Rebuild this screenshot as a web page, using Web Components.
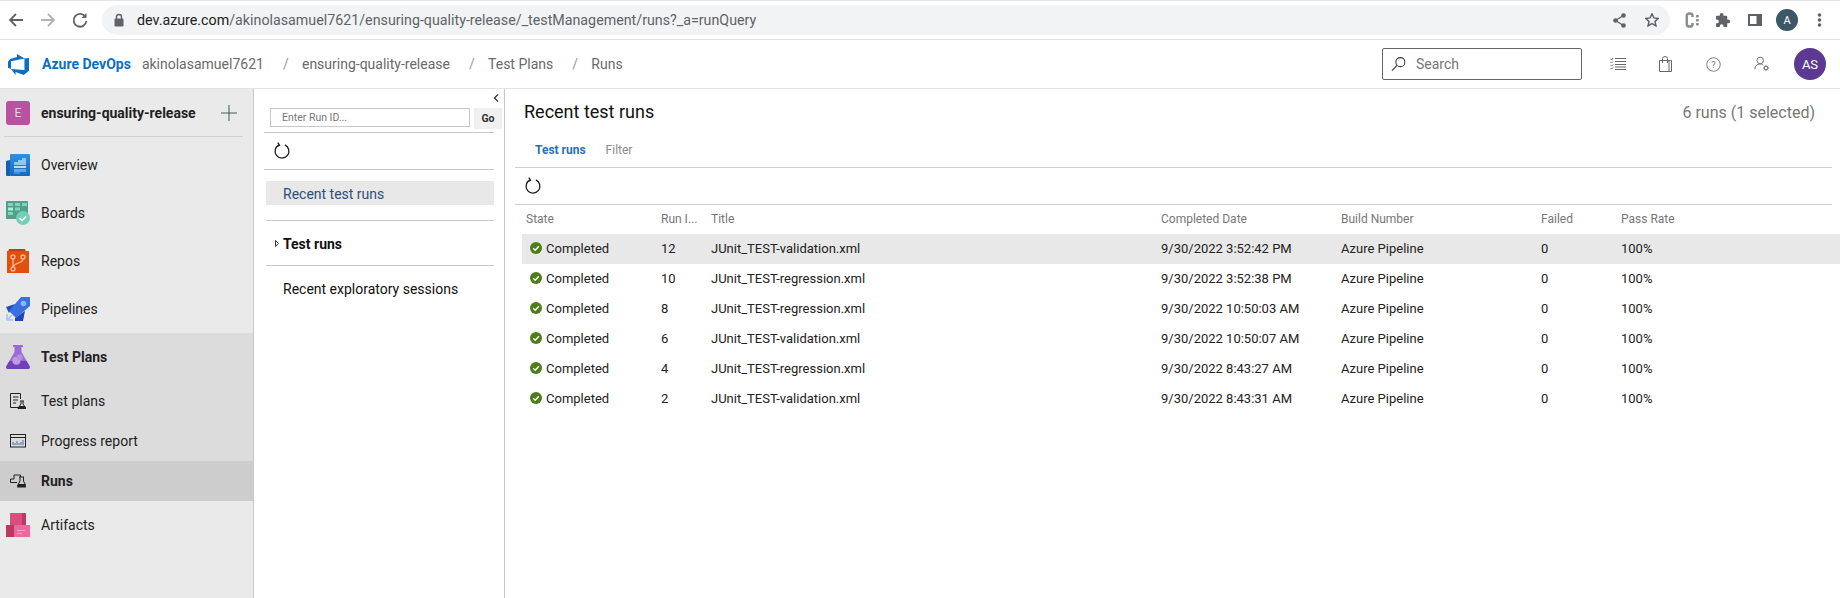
<!DOCTYPE html>
<html><head><meta charset="utf-8"><title>Runs</title>
<style>
html,body{margin:0;padding:0;height:598px;overflow:hidden;background:#fff;font-family:Roboto,"Liberation Sans",sans-serif;color:#222}
body{display:flex;flex-direction:column}
</style></head><body>
<chrome-bar></chrome-bar>
<ado-header></ado-header>
<app-main></app-main>
<script>
const def=(name,html)=>customElements.define(name,class extends HTMLElement{
  constructor(){super();this.attachShadow({mode:'open'}).innerHTML=typeof html==='function'?html(this):html}
  connectedCallback(){if(typeof html==='function')this.shadowRoot.innerHTML=html(this)}
});
const refresh=`<svg width="18" height="18" viewBox="0 0 18 18" fill="none" stroke="#1c1c1c" stroke-width="1.300"><path d="M6 3A6.900 6.900 0 1 0 11.800 2.900"/><path d="M4.800 .6 6.500 3.300 3.200 4.800"/></svg>`;

def('chrome-bar',`<style>
:host{display:flex;align-items:center;height:40px;flex:none;box-sizing:border-box;border-top:1px solid #e3e4e6;border-bottom:1px solid #dfe1e4;background:#fff;padding-left:7px}
svg{display:block;flex:none}
.url{flex:none;margin-left:13px;width:1568px;height:30px;border-radius:15px;background:#f1f3f4;display:flex;align-items:center;box-sizing:border-box;padding:0 11px;font:14.25px Roboto,sans-serif;color:#5f6368;white-space:nowrap}
.url b{font-weight:400;color:#202124}
.t{flex:1}
.r{display:flex;align-items:center;margin-left:15px}
.a{width:22px;height:22px;border-radius:50%;background:#3c5866;color:#fff;font:11px Roboto,sans-serif;display:flex;align-items:center;justify-content:center}
</style>
<svg width="18" height="18" viewBox="0 0 18 18" fill="none" stroke="#5f6368" stroke-width="1.8" style="margin-right:14px"><path d="M16 9H3M9 3 3 9l6 6"/></svg>
<svg width="18" height="18" viewBox="0 0 18 18" fill="none" stroke="#b0b3b7" stroke-width="1.8" style="margin-right:14px"><path d="M2 9h13M9 3l6 6-6 6"/></svg>
<svg width="18" height="18" viewBox="0 0 18 18" fill="none" stroke="#5f6368" stroke-width="1.8"><path d="M14.500 6A6.400 6.400 0 1 0 15.400 10"/><path d="M15.500 2v5h-5" fill="#5f6368" stroke="none"/></svg>
<div class="url"><svg width="12" height="14" viewBox="0 0 12 14" style="margin-right:12px"><path d="M3.500 6V4a2.500 2.500 0 0 1 5 0v2" fill="none" stroke="#5f6368" stroke-width="1.400"/><rect x="1.500" y="5.500" width="9" height="8" rx="1.200" fill="#5f6368"/></svg><span><b>dev.azure.com</b>/akinolasamuel7621/ensuring-quality-release/_testManagement/runs?_a=runQuery</span><span class="t"></span>
<svg width="13" height="15" viewBox="0 0 13 15" style="margin-right:19px"><g fill="#5f6368"><circle cx="10.500" cy="2.500" r="2.300"/><circle cx="10.500" cy="12.500" r="2.300"/><circle cx="2.500" cy="7.500" r="2.300"/></g><path d="M10.500 2.500 2.500 7.500l8 5" fill="none" stroke="#5f6368" stroke-width="1.300"/></svg>
<svg width="14" height="14" viewBox="1 1 14 14"><path d="m8 1.800 1.900 4.100 4.400.5-3.300 3 .9 4.400L8 11.600l-3.900 2.200.9-4.400-3.300-3 4.400-.5z" fill="none" stroke="#5f6368" stroke-width="1.500"/></svg></div>
<div class="r">
<svg width="14" height="16" viewBox="0 0 14 16" style="margin-right:17px"><path d="M7.500 5V3.800C7.500 2 6.500 1.400 4.700 1.400S1.800 2 1.800 3.800v8.400c0 1.800 1 2.400 2.900 2.400s2.800-.6 2.800-2.400V11" fill="none" stroke="#8a8d91" stroke-width="2.500"/><g fill="#8a8d91"><rect x="11" y="3" width="2.800" height="2.400" rx=".6"/><rect x="11" y="7" width="2.800" height="2.400" rx=".6"/><rect x="11" y="11" width="2.800" height="2.400" rx=".6"/></g></svg>
<svg width="15" height="15" viewBox="2 2 16 16" style="margin-right:17px"><path fill="#5f6368" d="M3 5h3V4a2 2 0 0 1 4 0v1h3a1 1 0 0 1 1 1v3h1a2 2 0 0 1 0 4h-1v3a1 1 0 0 1-1 1h-3v-1a2 2 0 0 0-4 0v1H3a1 1 0 0 1-1-1v-3h1a2 2 0 0 0 0-4H2V6a1 1 0 0 1 1-1z"/></svg>
<svg width="14" height="12" viewBox="0 0 14 12" style="margin-right:14px"><path fill="#5f6368" fill-rule="evenodd" d="M0 0h14v12H0zM2 2v8h6.500V2z"/></svg>
<span class="a">A</span>
<svg width="5" height="14" viewBox="0 0 5 14" style="margin-left:19px"><g fill="#5f6368"><circle cx="2.500" cy="2" r="1.800"/><circle cx="2.500" cy="7" r="1.800"/><circle cx="2.500" cy="12" r="1.800"/></g></svg>
</div>`);

def('ado-header',`<style>
:host{display:flex;align-items:center;height:49px;flex:none;box-sizing:border-box;border-bottom:1px solid #e3e3e3;background:#fff;padding:0 14px 0 8px;font-size:14px;color:#6a6a6a}
.brand{color:#0b6fc6;font-weight:700;font-size:14px;margin-left:13px;margin-right:11px;white-space:nowrap}
.s{color:#9a9a9a;margin:0 13.300px 0 19px}
.sp{flex:1}
.search{width:200px;height:32px;box-sizing:border-box;border:1px solid #666;border-radius:2px;display:flex;align-items:center;padding-left:8px;gap:10px;color:#767676;font-size:14px;margin-right:28px}
.ic{display:flex;align-items:center}
.av{width:32px;height:32px;border-radius:50%;background:#5c3a94;color:#fff;display:flex;align-items:center;justify-content:center;font-size:13px;margin-left:24px}
</style>
<svg width="21" height="21" viewBox="1 1 16 16"><path fill="#0b6fc6" d="M17 4v9.740l-4 3.280-6.200-2.260V17L3.290 12.410l10.230.8V4.440zm-3.410.49L7.850 1V3.290L2.580 4.840 1 6.870v4.610l2.260 1V6.570z"/></svg>
<span class="brand">Azure DevOps</span><span>akinolasamuel7621</span><span class="s">/</span><span>ensuring-quality-release</span><span class="s">/</span><span>Test Plans</span><span class="s">/</span><span>Runs</span><span class="sp"></span>
<div class="search"><svg width="15" height="16" viewBox="0 0 16 16" fill="none" stroke="#333" stroke-width="1.100"><circle cx="10" cy="6" r="4.800"/><path d="M6.500 9.500 1 15"/></svg>Search</div>
<span class="ic" style="margin-right:33px"><svg width="16" height="12" viewBox="0 0 16 12" fill="none" stroke="#666" stroke-width="1"><path d="M5 .5h11M5 3.500h11M5 6.500h11M5 9h11M5 11.500h11M.5 1l1 1 1.500-2M.5 4l1 1 1.500-1.500M.5 7l1 1 1.500-1.500M.5 10l1 1 1.500-1.500"/></svg></span>
<span class="ic" style="margin-right:34px"><svg width="13" height="16" viewBox="0 0 13 16" fill="none" stroke="#666" stroke-width="1"><path d="M.5 4.500h12v11H.5zM3.500 7V2.800a2.500 2.300 0 0 1 5 0V7M10 4.500v11"/></svg></span>
<span class="ic" style="margin-right:33px"><svg width="15" height="15" viewBox="0 0 16 16"><circle cx="8" cy="8" r="7.200" fill="none" stroke="#777" stroke-width="1"/><text x="8" y="11.600" font-size="10" text-anchor="middle" fill="#777" font-family="Roboto">?</text></svg></span>
<span class="ic"><svg width="16" height="16" viewBox="0 0 18 18" fill="none" stroke="#666" stroke-width="1"><circle cx="7" cy="5" r="3.700"/><path d="M1 15c0-4 2.500-6 6-6 1 0 2 .2 2.800.6"/><circle cx="13.500" cy="13.500" r="2"/><path d="M13.500 10v1.500M13.500 15.500V17M10 13.500h1.500M15.500 13.500H17M11 11l1 1M15 15l1 1M16 11l-1 1M12 15l-1 1"/></svg></span>
<span class="av">AS</span>`);

def('nav-item',`<style>
:host{display:flex;align-items:center;box-sizing:border-box;font-size:14px;color:#222;height:var(--h,48px);padding-left:6px;background:var(--bg,transparent);font-weight:var(--w,400)}
.i{width:24px;height:24px;flex:none;display:flex;align-items:center;justify-content:center;margin-right:11px}
</style><span class="i"><slot name="i"></slot></span><slot></slot>`);

def('ado-sidebar',`<style>
:host{display:block;width:253px;flex:none;background:#eaeaea;border-right:1px solid #c8c8c8;box-sizing:content-box}
.proj{display:flex;align-items:center;height:47px;padding-left:6px;font-weight:700;font-size:14px;color:#222}
.e{width:24px;height:24px;border-radius:3px;background:#b9539f;color:#e9cfe4;font-size:12px;font-weight:400;display:flex;align-items:center;justify-content:center;margin-right:11px}
.pl{margin-left:auto;margin-right:15px;display:flex}
.d{height:1px;background:#d0d0d0;margin:0 10px 4px 4px}
.grp{background:#dcdcdc}
svg{display:block}
</style>
<div class="proj"><span class="e">E</span>ensuring-quality-release<span class="pl"><svg width="18" height="18" viewBox="0 0 18 18"><path d="M9 1v16" stroke="#1f6b5a" stroke-width="1"/><path d="M1 9h16" stroke="#555" stroke-width="1"/></svg></span></div>
<div class="d"></div>
<nav-item><svg slot="i" width="24" height="24" viewBox="0 0 24 24"><defs><linearGradient id="ov" x1="0" y1="0" x2="0" y2="1"><stop offset="0" stop-color="#2f90e6"/><stop offset="1" stop-color="#1668bd"/></linearGradient></defs><path fill="#1560ad" d="M0 8l4-1v16H1a1 1 0 0 1-1-1z"/><rect x="4" y="1" width="20" height="22" rx="1" fill="url(#ov)"/><path fill="#8cc8f4" d="M16 5h4v7H8V9h4V7h4z"/><path fill="#b9def8" d="M8 13h12v2H8z"/><path fill="#5ea8e8" d="M8 16h12v3H8z"/><path fill="#3c8fdc" d="M8 19h6v2H8z"/></svg>Overview</nav-item>
<nav-item><svg slot="i" width="24" height="24" viewBox="0 0 24 24"><rect x="0" y="0" width="22" height="18" fill="#50a08a"/><g fill="#84d2bd"><rect x="2" y="2" width="5" height="3"/><rect x="9" y="2" width="5" height="3"/><rect x="16" y="2" width="5" height="3"/><rect x="9" y="6.500" width="5" height="3"/></g><rect x="2" y="6.500" width="5" height="3" fill="#a8f0df"/><rect x="2" y="11" width="5" height="3" fill="#84d2bd"/><circle cx="17" cy="17" r="7" fill="#74d0b4"/><path d="M13.500 17l2.500 2.500 4-4" fill="none" stroke="#fff" stroke-width="1.600"/></svg>Boards</nav-item>
<nav-item><svg slot="i" width="24" height="24" viewBox="0 0 24 24"><path fill="#c03d0c" d="M3 0h16l1 3H2z"/><rect x="1" y="2" width="22" height="22" fill="#e3500e"/><g fill="none" stroke="#f8b99a" stroke-width="1.300"><circle cx="7" cy="8" r="2"/><circle cx="17" cy="8" r="2"/><circle cx="7" cy="20" r="2"/><path d="M7 10v8M17 10c0 4-6 3-9.500 7"/></g></svg>Repos</nav-item>
<nav-item><svg slot="i" width="24" height="24" viewBox="0 0 24 24"><path fill="#1d4fc0" d="M0 10 9 7 3 16z"/><path fill="#1e46b4" d="M9 24h8l2-10-10 7z"/><path fill="#3a6fe0" d="M24 0v9L10 21 3 14 15 0z"/><circle cx="17.500" cy="6.500" r="2.800" fill="#8fb4f5"/><path fill="none" stroke="#a3c0f7" stroke-width="1.500" d="M1 17v6h6M1.500 22.500 6 18"/></svg>Pipelines</nav-item>
<div class="grp">
<nav-item style="--h:48px;--w:700"><svg slot="i" width="24" height="24" viewBox="0 0 24 24"><path fill="#9b6ad4" d="M7 0h10v2h-1.500v5l8 14c.8 1.500 0 3-1.500 3H2c-1.500 0-2.300-1.500-1.500-3l8-14V2H7z"/><path fill="#6f42b8" d="M3.500 16h17l3 5c.8 1.500 0 3-1.500 3H2c-1.500 0-2.300-1.500-1.500-3z"/><circle cx="10.400" cy="15.700" r="4" fill="#c29be6"/><circle cx="13.800" cy="12.300" r="3" fill="#b58de0"/></svg>Test Plans</nav-item>
<nav-item style="--h:40px"><svg slot="i" width="16" height="16" viewBox="0 0 16 16" fill="none" stroke="#222" stroke-width="1"><path d="M9 14.500H.5V.5h10V6M3 4h5.500M3 7h5M3 10h3"/><path d="M10 8h4M11 8v3l-3 4.500h8L13 11V8"/><path d="M9 13h6l1 2.500H8z" fill="#222" stroke="none"/></svg>Test plans</nav-item>
<nav-item style="--h:40px"><svg slot="i" width="16" height="14" viewBox="0 0 16 14" fill="none" stroke="#222" stroke-width="1"><rect x=".5" y=".5" width="15" height="12.500"/><path d="M.5 3.500h15"/><path d="M3 11V8M5 11V9M7 11V7M9 11V9M11 11V8M13 11V6" stroke="#3f6fa8"/></svg>Progress report</nav-item>
<nav-item style="--h:40px;--bg:#cdcdcd;--w:700"><svg slot="i" width="16" height="14" viewBox="0 0 16 14" fill="none" stroke="#222" stroke-width="1"><path d="M7 8.500H.5V5h3.500V1h6.500v2"/><path d="M9 3h5M10 3v4l-2.500 5h8.500l-2.500-5V3"/><path d="M8 10h7l1 3.500H7z" fill="#222" stroke="none"/></svg>Runs</nav-item>
</div>
<nav-item><svg slot="i" width="24" height="24" viewBox="0 0 24 24"><rect x="4" y="0" width="16" height="12" fill="#d94e7c"/><path fill="#bd3a68" d="M16 0h4v12h-4z"/><rect x="0" y="12" width="9" height="12" fill="#b83a5f"/><rect x="8" y="12" width="16" height="12" fill="#ec69a0"/><path fill="#f5a8c8" d="M11 17h8v1h-8zM11 20h5v1h-5z"/></svg>Artifacts</nav-item>`);

def('tree-panel',`<style>
:host{display:block;width:250px;flex:none;border-right:1px solid #c8c8c8;box-sizing:content-box;font-size:14px;position:relative}
.col{position:absolute;top:5px;right:5px}
.top{height:43px;padding:19px 2px 0 16px;box-sizing:border-box;display:flex;align-items:flex-start;gap:4px}
.inp{width:200px;height:19px;box-sizing:border-box;border:1px solid #c8c8c8;font-size:10.500px;color:#777;padding-left:11px;display:flex;align-items:center}
.go{width:28px;height:21px;background:#f0f0f0;font-size:10.500px;font-weight:700;color:#333;display:flex;align-items:center;justify-content:center}
.l{height:1px;background:#c8c8c8;margin:0 10px}
.re{height:36px;display:flex;align-items:center;padding-left:19px}
.sel{height:24px;box-sizing:border-box;padding:1px 0 0 17px;background:#e8e8e8;color:#2f4f7a;display:flex;align-items:center;margin:11px 10px 15px 12px}
.m{margin:0 10px 0 12px}
.row{display:flex;align-items:center;color:#111;padding-left:29px;box-sizing:border-box}
.ar{position:absolute;left:21px}
svg{display:block}
</style>
<svg class="col" width="6" height="8" viewBox="0 0 6 8" fill="none" stroke="#333" stroke-width="1.300"><path d="M5 .5 1.500 4 5 7.500"/></svg>
<div class="top"><div class="inp">Enter Run ID...</div><div class="go">Go</div></div>
<div class="l"></div>
<div class="re">${refresh}</div>
<div class="l"></div>
<div class="sel">Recent test runs</div>
<div class="l m"></div>
<div class="row" style="height:44px;padding-top:1px;font-weight:700"><svg class="ar" width="4" height="7" viewBox="0 0 4 7"><path d="M.5 .5 3.500 3.500.5 6.500z" fill="none" stroke="#333"/></svg>Test runs</div>
<div class="l m"></div>
<div class="row" style="height:46px">Recent exploratory sessions</div>`);

def('run-row',h=>{const g=n=>h.getAttribute(n)||'';return `<style>
:host{display:grid;grid-template-columns:139px 50px 450px 180px 200px 80px 1fr;height:30px;box-sizing:border-box;padding-bottom:2px;align-items:center;font-size:13px;color:#222;background:${h.hasAttribute('selected')?'#e8e8e8':'transparent'}}
.st{display:flex;align-items:center;padding-left:8px;gap:4px}
svg{display:block}
</style><span class="st"><svg width="12" height="12" viewBox="0 0 12 12"><circle cx="6" cy="6" r="6" fill="#4d7d17"/><path d="M3.200 6.200 5.200 8.200 8.900 4.300" fill="none" stroke="#fff" stroke-width="1.500"/></svg>Completed</span><span>${g('run')}</span><span>${g('name')}</span><span>${g('date')}</span><span>Azure Pipeline</span><span>0</span><span>100%</span>`});

def('runs-view',`<style>
:host{display:block;flex:1;min-width:0;padding-left:10px;box-sizing:border-box}
.head{display:flex;justify-content:space-between;align-items:center;height:24px;margin-top:10px;padding:0 25px 0 9px}
h1{margin:0;font-size:18px;font-weight:400;color:#111}
.c{font-size:16px;color:#777;position:relative;top:1px}
.tabs{display:flex;font-size:12px;height:44px;padding:10px 0 0 20px;box-sizing:border-box;gap:20px;align-items:center}
.on{color:#2a6fb8;font-weight:700}.off{color:#8a8a8a}
.l{height:1px;background:#d0d0d0;margin-right:8px}
.re{height:36px;display:flex;align-items:center;padding-left:9px}
.hdr{display:grid;grid-template-columns:139px 50px 450px 180px 200px 80px 1fr;height:29px;box-sizing:border-box;padding:0 0 1px 7px;align-items:center;font-size:12px;color:#777}
.hdr span:first-child{padding-left:4px}
.rows{padding-left:7px}
</style>
<div class="head"><h1>Recent test runs</h1><span class="c">6 runs (1 selected)</span></div>
<div class="tabs"><span class="on">Test runs</span><span class="off">Filter</span></div>
<div class="l"></div>
<div class="re">${refresh}</div>
<div class="l"></div>
<div class="hdr"><span>State</span><span>Run I...</span><span>Title</span><span>Completed Date</span><span>Build Number</span><span>Failed</span><span>Pass Rate</span></div>
<div class="rows"><slot></slot></div>`);

def('app-main',`<style>:host{display:flex;flex:1;min-height:0}</style>
<ado-sidebar></ado-sidebar><tree-panel></tree-panel>
<runs-view>
<run-row selected run="12" name="JUnit_TEST-validation.xml" date="9/30/2022 3:52:42 PM"></run-row>
<run-row run="10" name="JUnit_TEST-regression.xml" date="9/30/2022 3:52:38 PM"></run-row>
<run-row run="8" name="JUnit_TEST-regression.xml" date="9/30/2022 10:50:03 AM"></run-row>
<run-row run="6" name="JUnit_TEST-validation.xml" date="9/30/2022 10:50:07 AM"></run-row>
<run-row run="4" name="JUnit_TEST-regression.xml" date="9/30/2022 8:43:27 AM"></run-row>
<run-row run="2" name="JUnit_TEST-validation.xml" date="9/30/2022 8:43:31 AM"></run-row>
</runs-view>`);
</script></body></html>
